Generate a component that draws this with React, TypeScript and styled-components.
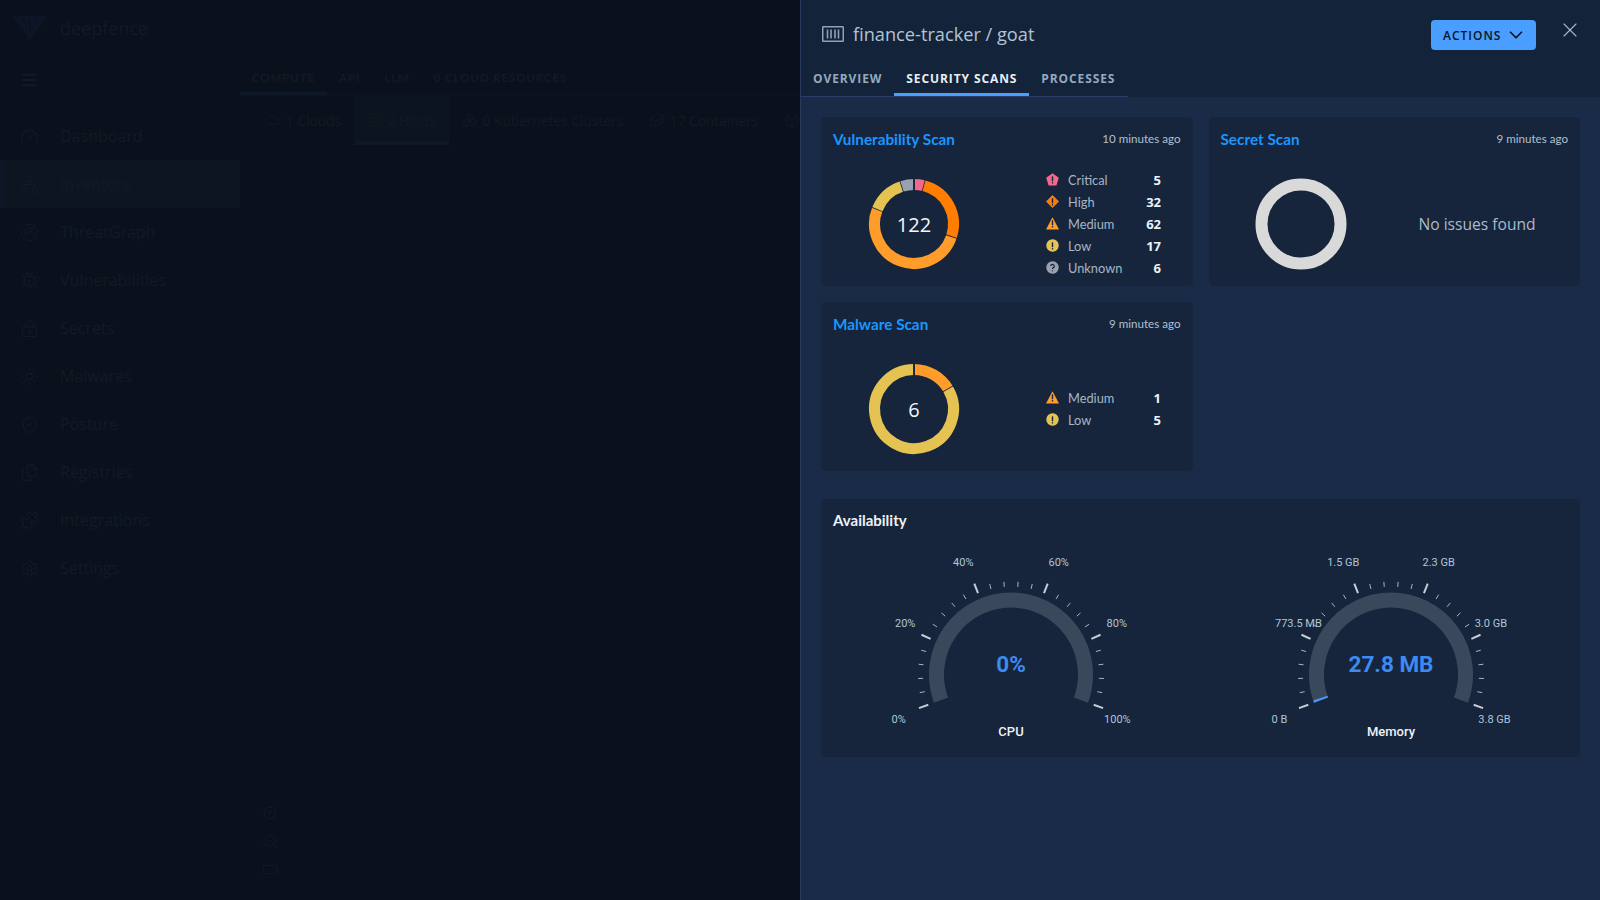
import styled, { createGlobalStyle } from "styled-components";
import {
  Box,
  Bug,
  ChevronDown,
  Container as ContainerIcon,
  Cloud,
  Files,
  Gauge as GaugeIcon,
  LockKeyhole,
  Menu,
  Network,
  Puzzle,
  Radar,
  RectangleHorizontal,
  Server,
  Settings,
  ShieldCheck,
  Boxes,
  Sun,
  X,
  ZoomIn,
  ZoomOut,
} from "lucide-react";

const FONT = `"Open Sans", "Noto Sans", sans-serif`;
const SMALL_FONT = `"Lato", "Open Sans", sans-serif`;
const DIM = "#121a25";
const CARD = "#16253c";

const GlobalStyle = createGlobalStyle`
  html, body {
    margin: 0;
    height: 100%;
    background: #0a111c;
    font-family: ${FONT};
    overflow: hidden;
  }
`;

const navItems = [
  { label: "Dashboard", icon: GaugeIcon },
  { label: "Inventory", icon: Network, active: true },
  { label: "ThreatGraph", icon: Radar },
  { label: "Vulnerabilities", icon: Bug },
  { label: "Secrets", icon: LockKeyhole },
  { label: "Malwares", icon: Sun },
  { label: "Posture", icon: ShieldCheck },
  { label: "Registries", icon: Files },
  { label: "Integrations", icon: Puzzle },
  { label: "Settings", icon: Settings },
];

// the last tab runs under the drawer, only its icon shows
const assetTabs = [
  { id: "clouds", label: "1 Clouds", icon: Cloud },
  { id: "hosts", label: "2 Hosts", icon: Server, active: true },
  { id: "clusters", label: "0 Kubernetes Clusters", icon: Boxes },
  { id: "containers", label: "17 Containers", icon: ContainerIcon },
  { id: "more", label: "", icon: Box },
];

const COLORS = {
  critical: "#f4698b",
  high: "#ff7d00",
  medium: "#ff9c2a",
  low: "#e5c352",
  unknown: "#9aa1ae",
};

type Severity = keyof typeof COLORS;

const LABELS: Record<Severity, string> = {
  critical: "Critical",
  high: "High",
  medium: "Medium",
  low: "Low",
  unknown: "Unknown",
};

const polar = (cx: number, cy: number, r: number, deg: number) => {
  const a = (deg * Math.PI) / 180;
  return { x: cx + r * Math.cos(a), y: cy - r * Math.sin(a) };
};

// arc going clockwise on screen, angles measured the maths way
const arcPath = (cx: number, cy: number, r: number, from: number, to: number) => {
  const a = polar(cx, cy, r, from);
  const b = polar(cx, cy, r, to);
  const large = Math.abs(from - to) > 180 ? 1 : 0;
  return `M${a.x} ${a.y}A${r} ${r} 0 ${large} 1 ${b.x} ${b.y}`;
};

const SeverityIcon = ({ kind }: { kind: Severity }) => {
  const color = COLORS[kind];
  return (
    <svg width="13" height="13" viewBox="0 0 13 13">
      {kind === "critical" && <path d="M6.5 0.2 12.8 4.8 10.4 12.4H2.6L0.2 4.8Z" fill={color} />}
      {kind === "high" && <path d="M6.5 0 13 6.5 6.5 13 0 6.5Z" fill={color} />}
      {kind === "medium" && <path d="M6.5 0.3 13 12.4H0Z" fill={color} />}
      {(kind === "low" || kind === "unknown") && <circle cx="6.5" cy="6.5" r="6.2" fill={color} />}
      {kind === "unknown" ? (
        <path d="M4.7 5.1a1.8 1.7 0 1 1 2.7 1.5c-.6.4-.9.7-.9 1.4M6.5 9.3v1" stroke={CARD} strokeWidth="1.2" fill="none" />
      ) : (
        <>
          <rect x="5.8" y="3.2" width="1.4" height="5" rx="0.5" fill={CARD} />
          <rect x="5.8" y="9" width="1.4" height="1.5" rx="0.5" fill={CARD} />
        </>
      )}
    </svg>
  );
};

const Donut = ({ data, total }: { data: { kind: Severity; value: number }[]; total: number }) => {
  const cx = 81;
  const cy = 62;
  const r = 39.5;
  const sum = data.reduce((s, d) => s + d.value, 0);
  let at = 90;
  return (
    <svg width="164" height="124" viewBox="0 0 164 124">
      {data.map((d) => {
        const to = at - (d.value / sum) * 360;
        const path = arcPath(cx, cy, r, at, to);
        const lineA = polar(cx, cy, 33, to);
        const lineB = polar(cx, cy, 46, to);
        at = to;
        return (
          <g key={d.kind}>
            <path d={path} fill="none" stroke={COLORS[d.kind]} strokeWidth="11" />
            <line x1={lineA.x} y1={lineA.y} x2={lineB.x} y2={lineB.y} stroke={CARD} strokeWidth="1.6" />
          </g>
        );
      })}
      <line x1={cx} y1={cy - 46} x2={cx} y2={cy - 33} stroke={CARD} strokeWidth="1.6" />
      <DonutTotal x={cx} y={cy + 7.5}>
        {total}
      </DonutTotal>
    </svg>
  );
};

const Gauge = ({
  name,
  value,
  labels,
  progress,
}: {
  name: string;
  value: string;
  labels: string[];
  progress?: number;
}) => {
  const cx = 150;
  const cy = 134.6;
  const ticks = [];
  for (let i = 0; i <= 25; i++) {
    const deg = 200 - (i * 220) / 25;
    const major = i % 5 === 0;
    const a = polar(cx, cy, 88, deg);
    const b = polar(cx, cy, major ? 98 : 93, deg);
    ticks.push(
      <line
        key={i}
        x1={a.x}
        y1={a.y}
        x2={b.x}
        y2={b.y}
        stroke={major ? "#c6ced6" : "#aab4bf"}
        strokeWidth={major ? 2 : 1}
      />,
    );
  }
  return (
    <svg width="300" height="200" viewBox="0 0 300 200">
      <path d={arcPath(cx, cy, 74.5, 200, -20)} fill="none" stroke="#3a485c" strokeWidth="15" />
      {progress !== undefined && (
        <path d={arcPath(cx, cy, 74.5, 200, 200 - progress * 220)} fill="none" stroke="#4a97f5" strokeWidth="15" />
      )}
      {ticks}
      <GaugeLabel x={cx - 119.5} y={cy + 48} textAnchor="start">{labels[0]}</GaugeLabel>
      <GaugeLabel x={cx - 116} y={cy - 48} textAnchor="start">{labels[1]}</GaugeLabel>
      <GaugeLabel x={cx - 47.7} y={cy - 109} textAnchor="middle">{labels[2]}</GaugeLabel>
      <GaugeLabel x={cx + 47.7} y={cy - 109} textAnchor="middle">{labels[3]}</GaugeLabel>
      <GaugeLabel x={cx + 116} y={cy - 48} textAnchor="end">{labels[4]}</GaugeLabel>
      <GaugeLabel x={cx + 119.7} y={cy + 48} textAnchor="end">{labels[5]}</GaugeLabel>
      <GaugeValue x={cx} y={132}>{value}</GaugeValue>
      <GaugeName x={cx} y={196}>{name}</GaugeName>
    </svg>
  );
};

const ScanCard = ({
  title,
  time,
  total,
  data,
}: {
  title: string;
  time: string;
  total: number;
  data: { kind: Severity; value: number }[];
}) => (
  <Card>
    <CardHeader>
      <CardTitle>{title}</CardTitle>
      <CardTime>{time}</CardTime>
    </CardHeader>
    <CardBody>
      <Donut data={data} total={total} />
      <Legend>
        {data.map((d) => (
          <LegendRow key={d.kind}>
            <SeverityIcon kind={d.kind} />
            <LegendLabel>{LABELS[d.kind]}</LegendLabel>
            <LegendCount>{d.value}</LegendCount>
          </LegendRow>
        ))}
      </Legend>
    </CardBody>
  </Card>
);

const App = () => {
  return (
    <>
      <GlobalStyle />
      <Page>
        <Sidebar>
          <Brand>
            <svg width="36" height="24" viewBox="0 0 36 24">
              <path d="M0 0H36L18 24Z" fill="#0d1626" />
              <path d="M10 2 16 14M18 2V18M26 2 20 14" stroke="#0a111c" strokeWidth="1" />
            </svg>
            <BrandName>deepfence</BrandName>
          </Brand>
          <MenuRow>
            <Menu size={18} strokeWidth={2.4} />
          </MenuRow>
          <Nav>
            {navItems.map((item) => (
              <NavItem key={item.label} $active={item.active}>
                <item.icon size={19} strokeWidth={1.4} />
                <span>{item.label}</span>
              </NavItem>
            ))}
          </Nav>
        </Sidebar>
        <Main>
          <MainTabs>
            <MainTab $active>COMPUTE</MainTab>
            <MainTab>API</MainTab>
            <MainTab>LLM</MainTab>
            <MainTab>0 CLOUD RESOURCES</MainTab>
          </MainTabs>
          <AssetTabs>
            {assetTabs.map((t) => (
              <AssetTab key={t.id} $active={t.active}>
                <t.icon size={16} strokeWidth={1.4} />
                {t.label}
              </AssetTab>
            ))}
          </AssetTabs>
          <ZoomTools>
            <ZoomIn size={17} strokeWidth={1.4} />
            <ZoomOut size={17} strokeWidth={1.4} />
            <RectangleHorizontal size={17} strokeWidth={1.4} />
          </ZoomTools>
        </Main>
      </Page>

      <Drawer>
        <DrawerHeader>
          <HeaderTop>
            <HeaderTitle>
              <svg width="22" height="16" viewBox="0 0 22 16" fill="none" stroke="#8fa2b6">
                <rect x="0.75" y="0.75" width="20.5" height="14.5" rx="0.5" strokeWidth="1.5" />
                <path d="M5.5 3.5V12.5M9 3.5V12.5M13 3.5V12.5M16.5 3.5V12.5" strokeWidth="1.6" />
              </svg>
              finance-tracker / goat
            </HeaderTitle>
            <ActionsButton>
              ACTIONS
              <ChevronDown size={22} strokeWidth={1.9} />
            </ActionsButton>
            <CloseButton>
              <X size={24} strokeWidth={1.1} />
            </CloseButton>
          </HeaderTop>
          <Tabs>
            <Tab>OVERVIEW</Tab>
            <Tab $active>SECURITY SCANS</Tab>
            <Tab>PROCESSES</Tab>
          </Tabs>
        </DrawerHeader>
        <DrawerBody>
          <CardGrid>
            <ScanCard
              title="Vulnerability Scan"
              time="10 minutes ago"
              total={122}
              data={[
                { kind: "critical", value: 5 },
                { kind: "high", value: 32 },
                { kind: "medium", value: 62 },
                { kind: "low", value: 17 },
                { kind: "unknown", value: 6 },
              ]}
            />
            <Card>
              <CardHeader>
                <CardTitle>Secret Scan</CardTitle>
                <CardTime>9 minutes ago</CardTime>
              </CardHeader>
              <CardBody>
                <svg width="164" height="124" viewBox="0 0 164 124">
                  <circle cx="80" cy="62" r="39.5" fill="none" stroke="#d9d9d9" strokeWidth="12" />
                </svg>
                <NoIssues>No issues found</NoIssues>
              </CardBody>
            </Card>
            <ScanCard
              title="Malware Scan"
              time="9 minutes ago"
              total={6}
              data={[
                { kind: "medium", value: 1 },
                { kind: "low", value: 5 },
              ]}
            />
          </CardGrid>
          <Availability>
            <AvailabilityTitle>Availability</AvailabilityTitle>
            <Gauges>
              <Gauge name="CPU" value="0%" labels={["0%", "20%", "40%", "60%", "80%", "100%"]} />
              <Gauge
                name="Memory"
                value="27.8 MB"
                progress={0.007}
                labels={["0 B", "773.5 MB", "1.5 GB", "2.3 GB", "3.0 GB", "3.8 GB"]}
              />
            </Gauges>
          </Availability>
        </DrawerBody>
      </Drawer>
    </>
  );
};

export default App;

const Page = styled.div`
  display: flex;
  width: 800px;
  height: 900px;
  color: ${DIM};
`;

const Sidebar = styled.aside`
  width: 240px;
  flex-shrink: 0;
`;

const Brand = styled.div`
  display: flex;
  align-items: center;
  gap: 12px;
  height: 56px;
  padding-left: 12px;
`;

const BrandName = styled.span`
  font-size: 18px;
  font-weight: 500;
`;

const MenuRow = styled.div`
  display: flex;
  align-items: center;
  height: 48px;
  padding-left: 20px;
  margin-bottom: 8px;
`;

const Nav = styled.nav`
  display: flex;
  flex-direction: column;
`;

const NavItem = styled.div<{ $active?: boolean }>`
  display: flex;
  align-items: center;
  gap: 21px;
  height: 48px;
  padding-left: 20px;
  font-size: 16px;
  background: ${(p) => (p.$active ? "#0d1520" : "transparent")};
  box-shadow: ${(p) => (p.$active ? "inset 3px 0 0 #0d1728" : "none")};
`;

const Main = styled.main`
  position: relative;
  flex: 1;
  min-width: 0;
  overflow: hidden;
`;

const MainTabs = styled.div`
  display: flex;
  height: 96px;
  align-items: flex-end;
  border-bottom: 1px solid #0c1420;
  box-sizing: border-box;
`;

const MainTab = styled.div<{ $active?: boolean }>`
  box-sizing: border-box;
  height: 30px;
  padding: 6px 12px 0;
  font-family: ${SMALL_FONT};
  font-size: 11.5px;
  font-weight: 700;
  letter-spacing: 0.9px;
  border-bottom: 3px solid ${(p) => (p.$active ? "#0e1829" : "transparent")};
`;

const AssetTabs = styled.div`
  display: flex;
  height: 49px;
  padding-left: 12px;
  white-space: nowrap;
`;

const AssetTab = styled.div<{ $active?: boolean }>`
  display: flex;
  align-items: center;
  flex-shrink: 0;
  gap: 5px;
  box-sizing: border-box;
  padding: 3px 13px 0;
  font-size: 13.7px;
  background: ${(p) => (p.$active ? "#0c141f" : "transparent")};
  border-bottom: 4px solid ${(p) => (p.$active ? "#0e1829" : "transparent")};
`;

const ZoomTools = styled.div`
  position: absolute;
  left: 22px;
  top: 805px;
  display: flex;
  flex-direction: column;
  gap: 11px;
`;

const Drawer = styled.section`
  position: fixed;
  top: 0;
  right: 0;
  bottom: 0;
  width: 800px;
  box-sizing: border-box;
  border-left: 1px solid #2a3a5c;
  background: #1a2b48;
  display: flex;
  flex-direction: column;
`;

const DrawerHeader = styled.header`
  height: 97px;
  flex-shrink: 0;
  background: #12233a;
  display: flex;
  flex-direction: column;
`;

const HeaderTop = styled.div`
  display: flex;
  align-items: flex-start;
  height: 70px;
  padding: 20px 18px 0 21px;
  box-sizing: border-box;
`;

const HeaderTitle = styled.h2`
  display: flex;
  align-items: center;
  gap: 9px;
  flex: 1;
  margin: 0;
  height: 28px;
  font-size: 18.2px;
  font-weight: 500;
  color: #b4c3d2;
`;

const ActionsButton = styled.button`
  display: flex;
  align-items: center;
  gap: 4px;
  width: 105px;
  height: 30px;
  padding: 0 0 0 12px;
  border: 0;
  border-radius: 4px;
  background: #4a9eff;
  color: #0b1424;
  font-family: ${FONT};
  font-size: 12px;
  font-weight: 600;
  letter-spacing: 1px;
`;

const CloseButton = styled.button`
  display: flex;
  width: 24px;
  height: 24px;
  margin: -2px 0 0 22px;
  padding: 0;
  border: 0;
  background: none;
  color: #aab7c4;
`;

const Tabs = styled.div`
  display: flex;
  width: 327px;
  flex: 1;
  border-bottom: 1px solid #2b3a66;
`;

const Tab = styled.div<{ $active?: boolean }>`
  display: flex;
  align-items: center;
  height: 24px;
  padding: 0 12px 3px;
  font-size: 12px;
  font-weight: 700;
  letter-spacing: 0.9px;
  white-space: nowrap;
  color: ${(p) => (p.$active ? "#e8eef5" : "#94aabd")};
  border-bottom: 3px solid ${(p) => (p.$active ? "#4a9eff" : "transparent")};
`;

const DrawerBody = styled.div`
  display: flex;
  flex-direction: column;
  gap: 28px;
  padding: 20px;
`;

const CardGrid = styled.div`
  display: grid;
  grid-template-columns: 1fr 1fr;
  gap: 16px;
`;

const Card = styled.article`
  height: 169px;
  box-sizing: border-box;
  padding: 11px 12px 0;
  border-radius: 5px;
  background: ${CARD};
`;

const CardHeader = styled.div`
  display: flex;
  align-items: center;
  justify-content: space-between;
  height: 21px;
`;

const CardTitle = styled.h3`
  margin: 0;
  font-family: ${SMALL_FONT};
  font-size: 15.3px;
  font-weight: 700;
  color: #1a96ff;
`;

const CardTime = styled.span`
  font-family: ${SMALL_FONT};
  font-size: 11.6px;
  color: #b0c0cf;
`;

const CardBody = styled.div`
  display: flex;
  align-items: center;
  height: 124px;
  margin-top: 13px;
`;

const DonutTotal = styled.text`
  text-anchor: middle;
  font-family: ${FONT};
  font-size: 20px;
  font-weight: 500;
  fill: #f4f7fa;
`;

const Legend = styled.div`
  display: flex;
  flex-direction: column;
  width: 115px;
  margin: -1px 0 0 49px;
`;

const LegendRow = styled.div`
  display: flex;
  align-items: center;
  height: 22px;
`;

const LegendLabel = styled.span`
  flex: 1;
  margin-left: 9px;
  font-family: ${SMALL_FONT};
  font-size: 12.8px;
  color: #a6b6c6;
`;

const LegendCount = styled.span`
  font-family: ${FONT};
  font-size: 13px;
  font-weight: 700;
  color: #eef2f6;
`;

const NoIssues = styled.div`
  margin-left: 34px;
  font-size: 15.6px;
  color: #aabacb;
`;

const Availability = styled.article`
  height: 258px;
  box-sizing: border-box;
  padding-top: 12px;
  border-radius: 5px;
  background: ${CARD};
`;

const AvailabilityTitle = styled.h3`
  margin: 0 0 11px 12px;
  height: 18px;
  line-height: 18px;
  font-family: ${SMALL_FONT};
  font-size: 15px;
  font-weight: 700;
  color: #eef2f6;
`;

const Gauges = styled.div`
  display: grid;
  grid-template-columns: 380px 380px;
  justify-items: center;
`;

const GaugeLabel = styled.text`
  font-family: "Roboto", sans-serif;
  font-size: 11px;
  fill: #b0c6d8;
`;

const GaugeValue = styled.text`
  text-anchor: middle;
  font-family: "Roboto", sans-serif;
  font-size: 22.5px;
  font-weight: 700;
  fill: #3d8bf2;
`;

const GaugeName = styled.text`
  text-anchor: middle;
  font-family: "Roboto", sans-serif;
  font-size: 13px;
  font-weight: 500;
  fill: #eef2f6;
`;
